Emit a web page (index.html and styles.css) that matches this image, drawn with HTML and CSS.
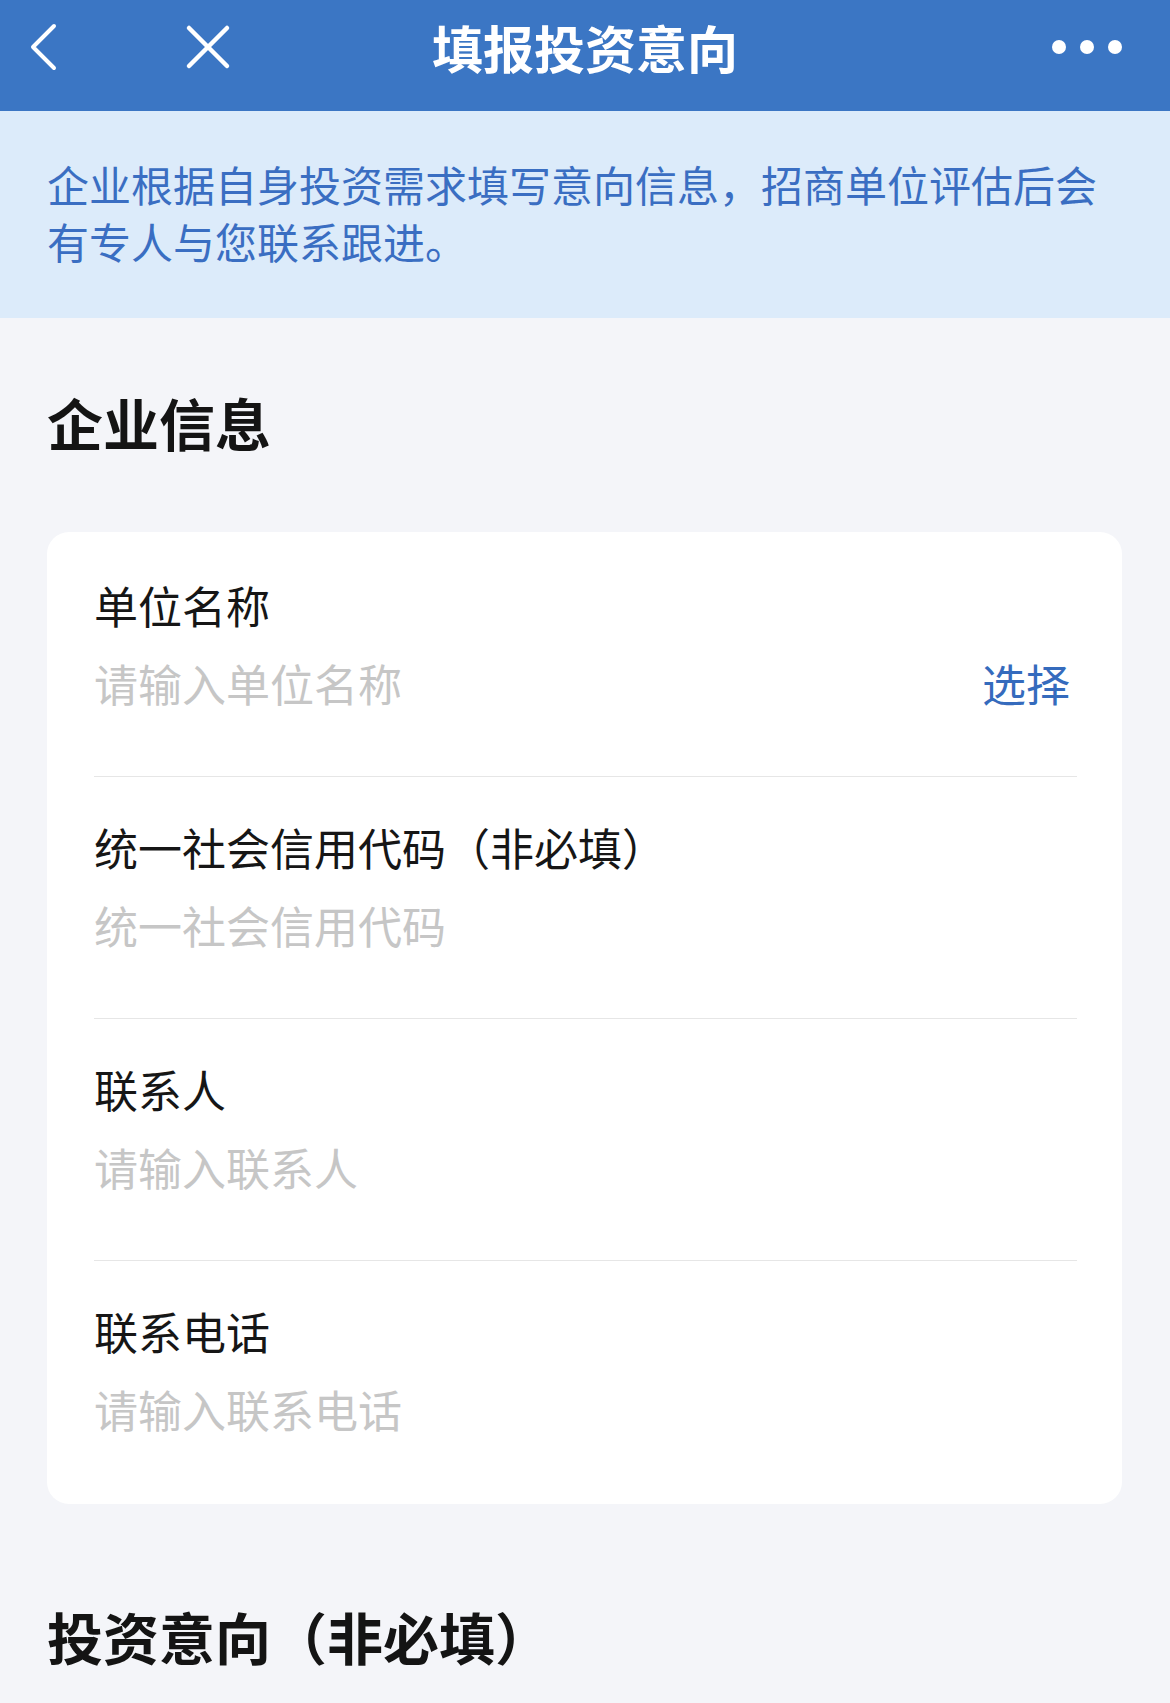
FILE: index.html
```html
<!DOCTYPE html>
<html>
<head lang="zh-CN">
    <meta charset="UTF-8">
    <title>填报投资意向</title>
    <link rel="stylesheet" href="styles.css">
</head>
<body>
<div class="nav">
    <div class="nav-left">
        <svg class="icon-back" width="30" height="50" viewBox="0 0 30 50">
            <polyline points="26,4 5,25 26,46" fill="none" stroke="#fff" stroke-width="4" stroke-linecap="round" stroke-linejoin="round"/>
        </svg>
        <svg class="icon-close" width="46" height="46" viewBox="0 0 46 46">
            <line x1="4" y1="4" x2="42" y2="42" stroke="#fff" stroke-width="4.5" stroke-linecap="round"/>
            <line x1="42" y1="4" x2="4" y2="42" stroke="#fff" stroke-width="4.5" stroke-linecap="round"/>
        </svg>
    </div>
    <div class="nav-title">填报投资意向</div>
    <div class="nav-right">
        <svg class="icon-more" width="72" height="16" viewBox="0 0 72 16">
            <circle cx="8" cy="8" r="7" fill="#fff"/>
            <circle cx="36" cy="8" r="7" fill="#fff"/>
            <circle cx="64" cy="8" r="7" fill="#fff"/>
        </svg>
    </div>
</div>

<div class="tip">企业根据自身投资需求填写意向信息，招商单位评估后会有专人与您联系跟进。</div>

<div class="section-title">企业信息</div>

<div class="card">
    <div class="field">
        <div class="label">单位名称</div>
        <div class="input-line">
            <span class="placeholder">请输入单位名称</span>
            <span class="pick">选择</span>
        </div>
    </div>
    <div class="field">
        <div class="label">统一社会信用代码（非必填）</div>
        <div class="input-line">
            <span class="placeholder">统一社会信用代码</span>
        </div>
    </div>
    <div class="field">
        <div class="label">联系人</div>
        <div class="input-line">
            <span class="placeholder">请输入联系人</span>
        </div>
    </div>
    <div class="field">
        <div class="label">联系电话</div>
        <div class="input-line">
            <span class="placeholder">请输入联系电话</span>
        </div>
    </div>
</div>

<div class="section-title second">投资意向（非必填）</div>
</body>
</html>
```

FILE: styles.css
```css
* {
    margin: 0;
    padding: 0;
}

body {
    background: #f4f5f9;
    font-family: "Noto Sans CJK SC", "Noto Sans", sans-serif;
    color: #161616;
    width: 1170px;
}

.nav {
    display: grid;
    grid-template-columns: 1fr auto 1fr;
    align-items: center;
    height: 111px;
    padding-bottom: 18px;
    box-sizing: border-box;
    background: #3b76c4;
}

.nav-left {
    display: flex;
    align-items: center;
    padding-left: 28px;
}

.icon-close {
    margin-left: 127px;
}

.nav-title {
    font-size: 51px;
    font-weight: 700;
    color: #fff;
    line-height: 60px;
}

.nav-right {
    display: flex;
    justify-content: flex-end;
    padding-right: 47px;
}

.tip {
    background: #dcebfa;
    color: #3a6ec2;
    font-size: 42px;
    line-height: 57px;
    padding: 44px 47px 49px;
}

.section-title {
    font-size: 56px;
    font-weight: 700;
    line-height: 60px;
    padding: 74px 47px 0;
    color: #141414;
}

.section-title.second {
    padding-top: 102px;
}

.card {
    background: #fff;
    border-radius: 22px;
    margin: 80px 48px 0 47px;
    padding: 3px 0 1px;
}

.field {
    margin: 0 45px 0 47px;
    padding: 46px 0 69px;
    border-bottom: 1px solid #e6e6e6;
}

.field:last-child {
    border-bottom: none;
    padding-bottom: 70px;
}

.label {
    font-size: 44px;
    line-height: 48px;
}

.input-line {
    display: flex;
    justify-content: space-between;
    align-items: center;
    margin-top: 30px;
    font-size: 44px;
    line-height: 48px;
}

.placeholder {
    color: #c6c6c6;
}

.pick {
    color: #356bbd;
    padding-right: 7px;
}
```
